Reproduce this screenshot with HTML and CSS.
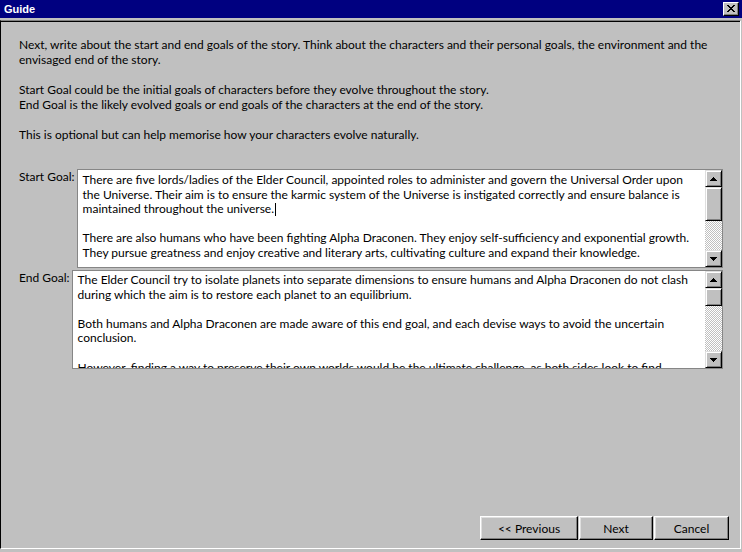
FILE: index.html
```html
<!DOCTYPE html>
<html lang="en">
<head>
<meta charset="utf-8">
<title>Guide</title>
<link rel="stylesheet" href="styles.css">
</head>
<body>
<div class="window">
  <div class="titlebar">
    <span class="title">Guide</span>
    <button class="close" type="button" aria-label="Close">
      <svg width="8" height="7" viewBox="0 0 8 7" shape-rendering="crispEdges"><path fill="#000" d="M0 0h2v1H0zM6 0h2v1H6zM1 1h2v1H1zM5 1h2v1H5zM2 2h4v1H2zM3 3h2v1H3zM2 4h4v1H2zM1 5h2v1H1zM5 5h2v1H5zM0 6h2v1H0zM6 6h2v1H6z"/></svg>
    </button>
  </div>
  <div class="client">
    <div class="intro">
      <p>Next, write about the start and end goals of the story. Think about the characters and their personal goals, the environment and the<br>envisaged end of the story.</p>
      <p>Start Goal could be the initial goals of characters before they evolve throughout the story.<br>End Goal is the likely evolved goals or end goals of the characters at the end of the story.</p>
      <p>This is optional but can help memorise how your characters evolve naturally.</p>
    </div>
    <div class="fields">
      <div class="field">
        <label class="label">Start Goal:</label>
        <div class="textbox">
          <div class="text text-start">
            <p>There are five lords/ladies of the Elder Council, appointed roles to administer and govern the Universal Order upon<br>the Universe. Their aim is to ensure the karmic system of the Universe is instigated correctly and ensure balance is<br>maintained throughout the universe.<span class="caret"></span></p>
            <p>There are also humans who have been fighting Alpha Draconen. They enjoy self-sufficiency and exponential growth.<br>They pursue greatness and enjoy creative and literary arts, cultivating culture and expand their knowledge.</p>
          </div>
          <div class="scrollbar">
            <div class="sbtn"><svg width="7" height="4" viewBox="0 0 7 4" shape-rendering="crispEdges"><path fill="#000" d="M3 0h1v1H3zM2 1h3v1H2zM1 2h5v1H1zM0 3h7v1H0z"/></svg></div>
            <div class="thumb thumb-big"></div>
            <div class="track"></div>
            <div class="sbtn"><svg width="7" height="4" viewBox="0 0 7 4" shape-rendering="crispEdges"><path fill="#000" d="M0 0h7v1H0zM1 1h5v1H1zM2 2h3v1H2zM3 3h1v1H3z"/></svg></div>
          </div>
        </div>
      </div>
      <div class="field">
        <label class="label">End Goal:</label>
        <div class="textbox">
          <div class="text">
            <p>The Elder Council try to isolate planets into separate dimensions to ensure humans and Alpha Draconen do not clash<br>during which the aim is to restore each planet to an equilibrium.</p>
            <p>Both humans and Alpha Draconen are made aware of this end goal, and each devise ways to avoid the uncertain<br>conclusion.</p>
            <p>However, finding a way to preserve their own worlds would be the ultimate challenge, as both sides look to find</p>
          </div>
          <div class="scrollbar">
            <div class="sbtn"><svg width="7" height="4" viewBox="0 0 7 4" shape-rendering="crispEdges"><path fill="#000" d="M3 0h1v1H3zM2 1h3v1H2zM1 2h5v1H1zM0 3h7v1H0z"/></svg></div>
            <div class="thumb thumb-small"></div>
            <div class="track"></div>
            <div class="sbtn"><svg width="7" height="4" viewBox="0 0 7 4" shape-rendering="crispEdges"><path fill="#000" d="M0 0h7v1H0zM1 1h5v1H1zM2 2h3v1H2zM3 3h1v1H3z"/></svg></div>
          </div>
        </div>
      </div>
    </div>
    <div class="buttons">
      <button class="btn btn-prev" type="button">&lt;&lt; Previous</button>
      <button class="btn btn-next" type="button">Next</button>
      <button class="btn btn-cancel" type="button">Cancel</button>
    </div>
  </div>
</div>
</body>
</html>
```

FILE: styles.css
```css
* { box-sizing: border-box; }
html, body {
  margin: 0;
  padding: 0;
  width: 742px;
  height: 552px;
  overflow: hidden;
  background: #c0c0c0;
}
body {
  font-family: "Lato", "Noto Sans", sans-serif;
  font-size: 12px;
  color: #000;
}
.window {
  display: flex;
  flex-direction: column;
  width: 742px;
  height: 552px;
}
.titlebar {
  height: 18px;
  flex: none;
  background: #000080;
  display: flex;
  align-items: flex-start;
  justify-content: space-between;
  padding: 0 3px 0 4px;
}
.title {
  font-family: "Liberation Sans", Arial, sans-serif;
  font-weight: bold;
  font-size: 11px;
  color: #fff;
  line-height: 16px;
  padding-top: 1px;
}
.close {
  margin: 2px 0 0 0;
  width: 16px;
  height: 14px;
  padding: 0;
  background: #c0c0c0;
  border: 1px solid;
  border-color: #fff #000 #000 #fff;
  box-shadow: inset -1px -1px #808080;
  display: flex;
  align-items: center;
  justify-content: center;
}
.close svg { display: block; margin: 0 0 1px 0; }

.client {
  flex: 1;
  margin: 2px 1px 3px 0;
  border-top: 1px solid #808080;
  border-left: 1px solid #000;
  border-right: 1px solid #fff;
  border-bottom: 1px solid #fff;
  box-shadow: inset 0 1px #000;
  padding: 16px 11px 8px 18px;
  display: flex;
  flex-direction: column;
}
.intro p {
  margin: 0 0 15px 0;
  line-height: 15px;
}
.intro p:last-child { margin-bottom: 0; }

.fields {
  margin: 27px 6px 0 0;
  display: flex;
  flex-direction: column;
  gap: 2px;
}
.field {
  display: flex;
  align-items: flex-start;
  gap: 2px;
}
.label {
  line-height: 15px;
  white-space: nowrap;
}
.textbox {
  flex: 1;
  height: 99px;
  background: #fff;
  border: 1px solid #868686;
  display: flex;
  overflow: hidden;
}
.text {
  flex: 1;
  padding: 2px 4px 0 5px;
  line-height: 14.6px;
  overflow: hidden;
  white-space: nowrap;
}
.text-start { padding-top: 3px; }
.text p { margin: 0 0 14.6px 0; }
.caret {
  display: inline-block;
  width: 1px;
  height: 13px;
  background: #000;
  vertical-align: -3px;
  margin-left: 1px;
}
.scrollbar {
  width: 17px;
  flex: none;
  display: flex;
  flex-direction: column;
}
.sbtn, .thumb {
  flex: none;
  background: #c0c0c0;
  border: 1px solid;
  border-color: #dfdfdf #000 #000 #dfdfdf;
  box-shadow: inset 1px 1px #fff, inset -1px -1px #808080;
}
.sbtn {
  height: 17px;
  display: flex;
  align-items: center;
  justify-content: center;
}
.sbtn svg { display: block; }
.thumb-big { height: 34px; }
.thumb-small { height: 18px; }
.track {
  flex: 1;
  background: repeating-conic-gradient(#fff 0 25%, #c0c0c0 0 50%) 0 0 / 2px 2px;
}

.buttons {
  margin-top: auto;
  display: flex;
  justify-content: flex-end;
  gap: 1px;
}
.btn {
  height: 24px;
  padding: 0;
  font-family: inherit;
  font-size: 12px;
  color: #000;
  background: #c0c0c0;
  border: 1px solid;
  border-color: #fff #000 #000 #fff;
  box-shadow: inset -1px -1px #808080, inset 1px 1px #dfdfdf;
}
.btn-prev { width: 98px; }
.btn-next { width: 74px; }
.btn-cancel { width: 75px; }
```
